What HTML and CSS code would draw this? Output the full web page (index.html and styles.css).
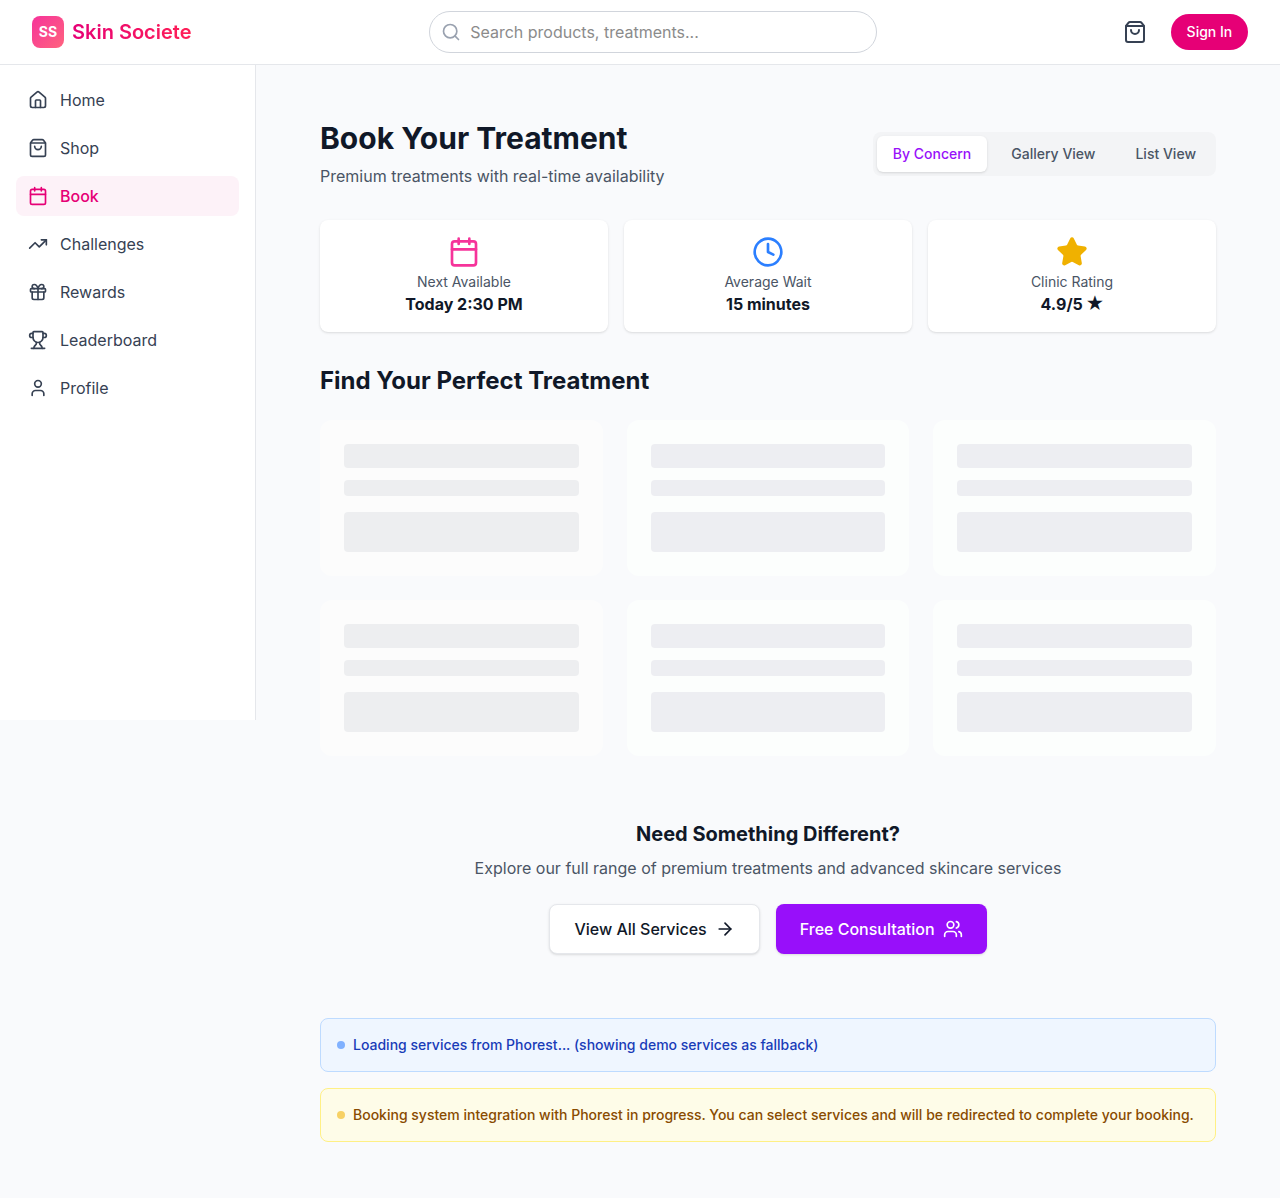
FILE: index.html
```html
<!DOCTYPE html>
<html lang="en">
<head>
<meta charset="utf-8">
<title>Skin Societe – Book Your Treatment</title>
<link rel="stylesheet" href="styles.css">
</head>
<body>
<svg class="sprite" aria-hidden="true">
  <symbol id="calendar" viewBox="0 0 24 24"><path d="M8 2v4M16 2v4M3 10h18"/><rect x="3" y="4" width="18" height="18" rx="2"/></symbol>
  <symbol id="bag" viewBox="0 0 24 24"><path d="M16 10a4 4 0 0 1-8 0"/><path d="M3.103 6.034h17.794"/><path d="M3.4 5.467a2 2 0 0 0-.4 1.2V20a2 2 0 0 0 2 2h14a2 2 0 0 0 2-2V6.667a2 2 0 0 0-.4-1.2l-2-2.667A2 2 0 0 0 17 2H7a2 2 0 0 0-1.6.8z"/></symbol>
</svg>

<header class="topbar">
  <a class="brand"><span class="brand-mark">SS</span><span class="brand-name">Skin Societe</span></a>
  <div class="search">
    <svg class="icon" viewBox="0 0 24 24"><path d="m21 21-4.34-4.34"/><circle cx="11" cy="11" r="8"/></svg>
    <input class="search-input" type="text" placeholder="Search products, treatments...">
  </div>
  <div class="actions">
    <svg class="icon cart" viewBox="0 0 24 24"><use href="#bag"/></svg>
    <button class="sign-in">Sign In</button>
  </div>
</header>

<div class="shell">
  <nav class="sidebar">
    <a class="nav-item"><svg class="icon" viewBox="0 0 24 24"><path d="M15 21v-8a1 1 0 0 0-1-1h-4a1 1 0 0 0-1 1v8"/><path d="M3 10a2 2 0 0 1 .709-1.528l7-5.999a2 2 0 0 1 2.582 0l7 5.999A2 2 0 0 1 21 10v9a2 2 0 0 1-2 2H5a2 2 0 0 1-2-2z"/></svg>Home</a>
    <a class="nav-item"><svg class="icon" viewBox="0 0 24 24"><use href="#bag"/></svg>Shop</a>
    <a class="nav-item active"><svg class="icon" viewBox="0 0 24 24"><use href="#calendar"/></svg>Book</a>
    <a class="nav-item"><svg class="icon" viewBox="0 0 24 24"><path d="M16 7h6v6"/><path d="m22 7-8.5 8.5-5-5L2 17"/></svg>Challenges</a>
    <a class="nav-item"><svg class="icon" viewBox="0 0 24 24"><rect x="3" y="8" width="18" height="4" rx="1"/><path d="M12 8v13"/><path d="M19 12v7a2 2 0 0 1-2 2H7a2 2 0 0 1-2-2v-7"/><path d="M7.5 8a2.5 2.5 0 0 1 0-5A4.8 8 0 0 1 12 8a4.8 8 0 0 1 4.5-5 2.5 2.5 0 0 1 0 5"/></svg>Rewards</a>
    <a class="nav-item"><svg class="icon" viewBox="0 0 24 24"><path d="M10 14.66v1.626a2 2 0 0 1-.976 1.696A5 5 0 0 0 7 21.978"/><path d="M14 14.66v1.626a2 2 0 0 0 .976 1.696A5 5 0 0 1 17 21.978"/><path d="M18 9h1.5a1 1 0 0 0 0-5H18"/><path d="M4 22h16"/><path d="M6 9a6 6 0 0 0 12 0V3a1 1 0 0 0-1-1H7a1 1 0 0 0-1 1z"/><path d="M6 9H4.5a1 1 0 0 1 0-5H6"/></svg>Leaderboard</a>
    <a class="nav-item"><svg class="icon" viewBox="0 0 24 24"><path d="M19 21v-2a4 4 0 0 0-4-4H9a4 4 0 0 0-4 4v2"/><circle cx="12" cy="7" r="4"/></svg>Profile</a>
  </nav>

  <main class="content">
    <div class="page-head">
      <div>
        <h1>Book Your Treatment</h1>
        <p class="lead">Premium treatments with real-time availability</p>
      </div>
      <div class="tabs">
        <button class="tab selected">By Concern</button>
        <button class="tab">Gallery View</button>
        <button class="tab">List View</button>
      </div>
    </div>

    <section class="stats">
      <div class="stat"><svg class="icon pink" viewBox="0 0 24 24"><use href="#calendar"/></svg><span class="label">Next Available</span><strong>Today 2:30 PM</strong></div>
      <div class="stat"><svg class="icon blue" viewBox="0 0 24 24"><path d="M12 6v6l4 2"/><circle cx="12" cy="12" r="10"/></svg><span class="label">Average Wait</span><strong>15 minutes</strong></div>
      <div class="stat"><svg class="icon gold" viewBox="0 0 24 24"><path d="M11.525 2.295a.53.53 0 0 1 .95 0l2.31 4.679a2.123 2.123 0 0 0 1.595 1.16l5.166.756a.53.53 0 0 1 .294.904l-3.736 3.638a2.123 2.123 0 0 0-.611 1.878l.882 5.14a.53.53 0 0 1-.771.56l-4.618-2.428a2.122 2.122 0 0 0-1.973 0L6.396 21.01a.53.53 0 0 1-.77-.56l.881-5.139a2.122 2.122 0 0 0-.611-1.879L2.16 9.795a.53.53 0 0 1 .294-.906l5.165-.755a2.122 2.122 0 0 0 1.597-1.16z"/></svg><span class="label">Clinic Rating</span><strong>4.9/5 <span class="star">★</span></strong></div>
    </section>

    <h2>Find Your Perfect Treatment</h2>
    <section class="skeletons">
      <div class="skeleton"><i></i><i></i><i></i></div>
      <div class="skeleton"><i></i><i></i><i></i></div>
      <div class="skeleton"><i></i><i></i><i></i></div>
      <div class="skeleton"><i></i><i></i><i></i></div>
      <div class="skeleton"><i></i><i></i><i></i></div>
      <div class="skeleton"><i></i><i></i><i></i></div>
    </section>

    <section class="more">
      <h3>Need Something Different?</h3>
      <p class="lead">Explore our full range of premium treatments and advanced skincare services</p>
      <div class="buttons">
        <button class="btn">View All Services<svg class="icon" viewBox="0 0 24 24"><path d="M5 12h14"/><path d="m12 5 7 7-7 7"/></svg></button>
        <button class="btn primary">Free Consultation<svg class="icon" viewBox="0 0 24 24"><path d="M16 21v-2a4 4 0 0 0-4-4H6a4 4 0 0 0-4 4v2"/><path d="M16 3.128a4 4 0 0 1 0 7.744"/><path d="M22 21v-2a4 4 0 0 0-3-3.87"/><circle cx="9" cy="7" r="4"/></svg></button>
      </div>
    </section>

    <div class="notice info"><span class="dot"></span>Loading services from Phorest... (showing demo services as fallback)</div>
    <div class="notice warn"><span class="dot"></span>Booking system integration with Phorest in progress. You can select services and will be redirected to complete your booking.</div>
  </main>
</div>
</body>
</html>
```
FILE: styles.css
```css
* { box-sizing: border-box; margin: 0; }
body {
  min-height: 1198px;
  background: #f9fafc;
  color: #101828;
  font: 16px/24px Inter, "Liberation Sans", sans-serif;
}
button, input { font: inherit; border: 0; padding: 0; }
.sprite { display: none; }
.icon {
  display: block;
  flex: none;
  width: 20px;
  height: 20px;
  fill: none;
  stroke: currentColor;
  stroke-width: 2;
  stroke-linecap: round;
  stroke-linejoin: round;
}

.topbar {
  display: flex;
  align-items: center;
  justify-content: space-between;
  height: 65px;
  padding: 0 32px;
  background: #fff;
  border-bottom: 1px solid #e5e7eb;
}
.brand { display: flex; align-items: center; gap: 8px; }
.brand-mark {
  width: 32px;
  height: 32px;
  border-radius: 8px;
  background: linear-gradient(to bottom right, #f6339a, #ff637e);
  color: #fff;
  font-size: 14px;
  font-weight: 700;
  line-height: 32px;
  text-align: center;
}
.brand-name {
  font-size: 20px;
  font-weight: 600;
  line-height: 28px;
  background: linear-gradient(to right, #e60076, #ff2056);
  -webkit-background-clip: text;
  background-clip: text;
  color: transparent;
}
.search {
  display: flex;
  align-items: center;
  gap: 9px;
  width: 448px;
  height: 42px;
  margin-right: 8px;
  padding: 0 11px;
  border: 1px solid #d1d5dc;
  border-radius: 21px;
  color: #99a1af;
}
.search-input { flex: 1; min-width: 0; background: none; outline: 0; }
.search-input::placeholder { color: #8b8b8b; opacity: 1; }
.actions { display: flex; align-items: center; gap: 24px; color: #364153; }
.cart { width: 24px; height: 24px; }
.sign-in {
  height: 36px;
  padding: 0 15.75px;
  border-radius: 18px;
  background: #e60076;
  color: #fff;
  font-size: 14px;
  font-weight: 500;
}

.shell { display: flex; align-items: flex-start; }
.sidebar {
  display: flex;
  flex-direction: column;
  gap: 8px;
  flex: none;
  width: 256px;
  height: 655px;
  padding: 15px 16px;
  background: #fff;
  border-right: 1px solid #e5e7eb;
}
.nav-item {
  display: flex;
  align-items: center;
  gap: 12px;
  height: 40px;
  padding: 0 12px;
  border-radius: 8px;
  color: #364153;
}
.nav-item.active { background: #fdf2f8; color: #e60076; font-weight: 500; }

.content { flex: 1; min-width: 0; padding: 55px 64px 56px; }
.page-head { display: flex; align-items: center; justify-content: space-between; }
h1 { font-size: 30px; line-height: 36px; margin-bottom: 8px; }
h2 { font-size: 24px; line-height: 32px; margin-bottom: 23px; }
h3 { font-size: 20px; line-height: 28px; margin-bottom: 8px; }
.lead { color: #4a5565; }
.tabs { display: flex; gap: 8px; padding: 4px; border-radius: 8px; background: #f3f4f6; }
.tab {
  height: 36px;
  padding: 0 16px;
  border-radius: 6px;
  background: none;
  color: #4a5565;
  font-size: 14px;
  font-weight: 500;
}
.tab.selected { background: #fff; color: #9810fa; box-shadow: 0 1px 3px #0000001a, 0 1px 2px -1px #0000001a; }

.stats { display: grid; grid-template-columns: repeat(3, 1fr); gap: 16px; margin: 32px 0 33px; }
.stat {
  display: flex;
  flex-direction: column;
  align-items: center;
  padding: 16px;
  border-radius: 8px;
  background: #fff;
  box-shadow: 0 1px 3px #0000001a, 0 1px 2px -1px #0000001a;
}
.stat .icon { width: 32px; height: 32px; margin-bottom: 4px; }
.stat .label { color: #4a5565; font-size: 14px; line-height: 20px; }
.stat strong { height: 24px; white-space: nowrap; }
.star { font-size: 18px; line-height: 0; margin: 0 -1px; }
.pink { color: #f6339a; }
.blue { color: #2b7fff; }
.stat .gold { color: #f0b100; fill: currentColor; }

.skeletons { display: grid; grid-template-columns: repeat(3, 1fr); gap: 24px; }
.skeleton { height: 156px; padding: 24px; border-radius: 12px; background: #fcfefd; }
.skeleton i { display: block; height: 24px; border-radius: 4px; background: #edeef2; }
.skeleton i:nth-child(2) { height: 16px; margin: 12px 0 16px; }
.skeleton i:nth-child(3) { height: 40px; }
.skeleton:nth-child(3n + 1) { background: #fcfcfc; }
.skeleton:nth-child(3n + 1) i { background: #edeef0; }

.more { padding: 64px 0; text-align: center; }
.buttons { display: flex; justify-content: center; gap: 16px; margin-top: 24px; }
.btn {
  display: flex;
  align-items: center;
  gap: 8px;
  height: 50px;
  padding: 0 24px;
  border: 1px solid #e5e7eb;
  border-radius: 8px;
  background: #fff;
  color: #101828;
  font-weight: 500;
  box-shadow: 0 1px 3px #0000001a, 0 1px 2px -1px #0000001a;
}
.btn.primary { border: 0; background: #980ffa; color: #fff; }

.notice {
  display: flex;
  align-items: center;
  gap: 8px;
  height: 54px;
  padding: 0 16px;
  border: 1px solid;
  border-radius: 8px;
  font-size: 14px;
  font-weight: 500;
  line-height: 20px;
  white-space: nowrap;
}
.dot { flex: none; width: 8px; height: 8px; border-radius: 50%; }
.info { background: #eff6ff; border-color: #bedbff; color: #193cb8; }
.info .dot { background: #80b1ff; }
.warn { margin-top: 16px; background: #fefce8; border-color: #fff085; color: #894b00; }
.warn .dot { background: #f7d164; }
```
